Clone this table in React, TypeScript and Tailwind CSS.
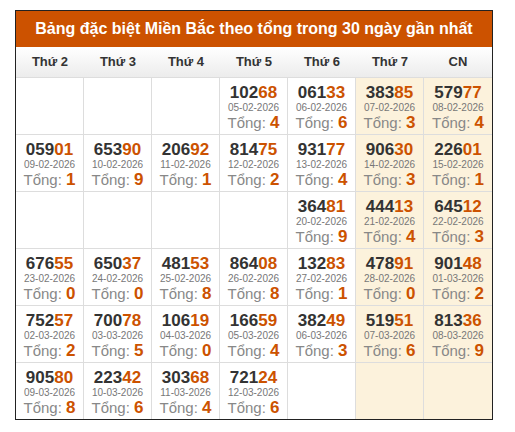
import React from "react";

type Cell = { n: string; d: string; t: string } | null;

const rows: Cell[][] = [
  [null, null, null,
    { n: "10268", d: "05-02-2026", t: "4" },
    { n: "06133", d: "06-02-2026", t: "6" },
    { n: "38385", d: "07-02-2026", t: "3" },
    { n: "57977", d: "08-02-2026", t: "4" }],
  [{ n: "05901", d: "09-02-2026", t: "1" },
    { n: "65390", d: "10-02-2026", t: "9" },
    { n: "20692", d: "11-02-2026", t: "1" },
    { n: "81475", d: "12-02-2026", t: "2" },
    { n: "93177", d: "13-02-2026", t: "4" },
    { n: "90630", d: "14-02-2026", t: "3" },
    { n: "22601", d: "15-02-2026", t: "1" }],
  [null, null, null, null,
    { n: "36481", d: "20-02-2026", t: "9" },
    { n: "44413", d: "21-02-2026", t: "4" },
    { n: "64512", d: "22-02-2026", t: "3" }],
  [{ n: "67655", d: "23-02-2026", t: "0" },
    { n: "65037", d: "24-02-2026", t: "0" },
    { n: "48153", d: "25-02-2026", t: "8" },
    { n: "86408", d: "26-02-2026", t: "8" },
    { n: "13283", d: "27-02-2026", t: "1" },
    { n: "47891", d: "28-02-2026", t: "0" },
    { n: "90148", d: "01-03-2026", t: "2" }],
  [{ n: "75257", d: "02-03-2026", t: "2" },
    { n: "70078", d: "03-03-2026", t: "5" },
    { n: "10619", d: "04-03-2026", t: "0" },
    { n: "16659", d: "05-03-2026", t: "4" },
    { n: "38249", d: "06-03-2026", t: "3" },
    { n: "51951", d: "07-03-2026", t: "6" },
    { n: "81336", d: "08-03-2026", t: "9" }],
  [{ n: "90580", d: "09-03-2026", t: "8" },
    { n: "22342", d: "10-03-2026", t: "6" },
    { n: "30368", d: "11-03-2026", t: "4" },
    { n: "72124", d: "12-03-2026", t: "6" },
    null, null, null],
];

const days = ["Thứ 2", "Thứ 3", "Thứ 4", "Thứ 5", "Thứ 6", "Thứ 7", "CN"];

export default function App() {
  return (
    <div className="min-h-[432px] w-[515px] bg-white pl-[15px] pt-[10px]" style={{ fontFamily: '"Liberation Sans", Arial, sans-serif' }}>
      <div className="w-[478px] border border-[#222]">
        <div className="flex h-[36px] items-center justify-center bg-[#cc5200] text-[16px] font-bold text-white">
          Bảng đặc biệt Miền Bắc theo tổng trong 30 ngày gần nhất
        </div>
        <div className="grid h-[31px] grid-cols-7 border-b border-[#ddd] bg-gradient-to-b from-white to-[#ececec]">
          {days.map((d) => (
            <div key={d} className="flex items-center justify-center text-[13px] font-bold text-[#333]">
              {d}
            </div>
          ))}
        </div>
        {rows.map((r, i) => (
          <div key={i} className={`grid grid-cols-7 ${i < rows.length - 1 ? "h-[57px] border-b border-[#ddd]" : "h-[56px]"}`}>
            {r.map((c, j) => (
              <div
                key={j}
                className={`flex flex-col items-center pt-[6px] ${j < 6 ? "border-r border-[#ddd]" : ""} ${j >= 5 ? "bg-[#fcf2dc]" : "bg-white"}`}
              >
                {c && (
                  <>
                    <div className="text-[17px] font-bold leading-[18px] text-[#333]">
                      {c.n.slice(0, 3)}
                      <span className="text-[#cc5200]">{c.n.slice(3)}</span>
                    </div>
                    <div className="text-[10px] leading-[12px] text-[#777]">{c.d}</div>
                    <div className="text-[15px] leading-[18px] text-[#888]">
                      Tổng: <span className="text-[17px] font-bold text-[#cc5200]">{c.t}</span>
                    </div>
                  </>
                )}
              </div>
            ))}
          </div>
        ))}
      </div>
    </div>
  );
}
